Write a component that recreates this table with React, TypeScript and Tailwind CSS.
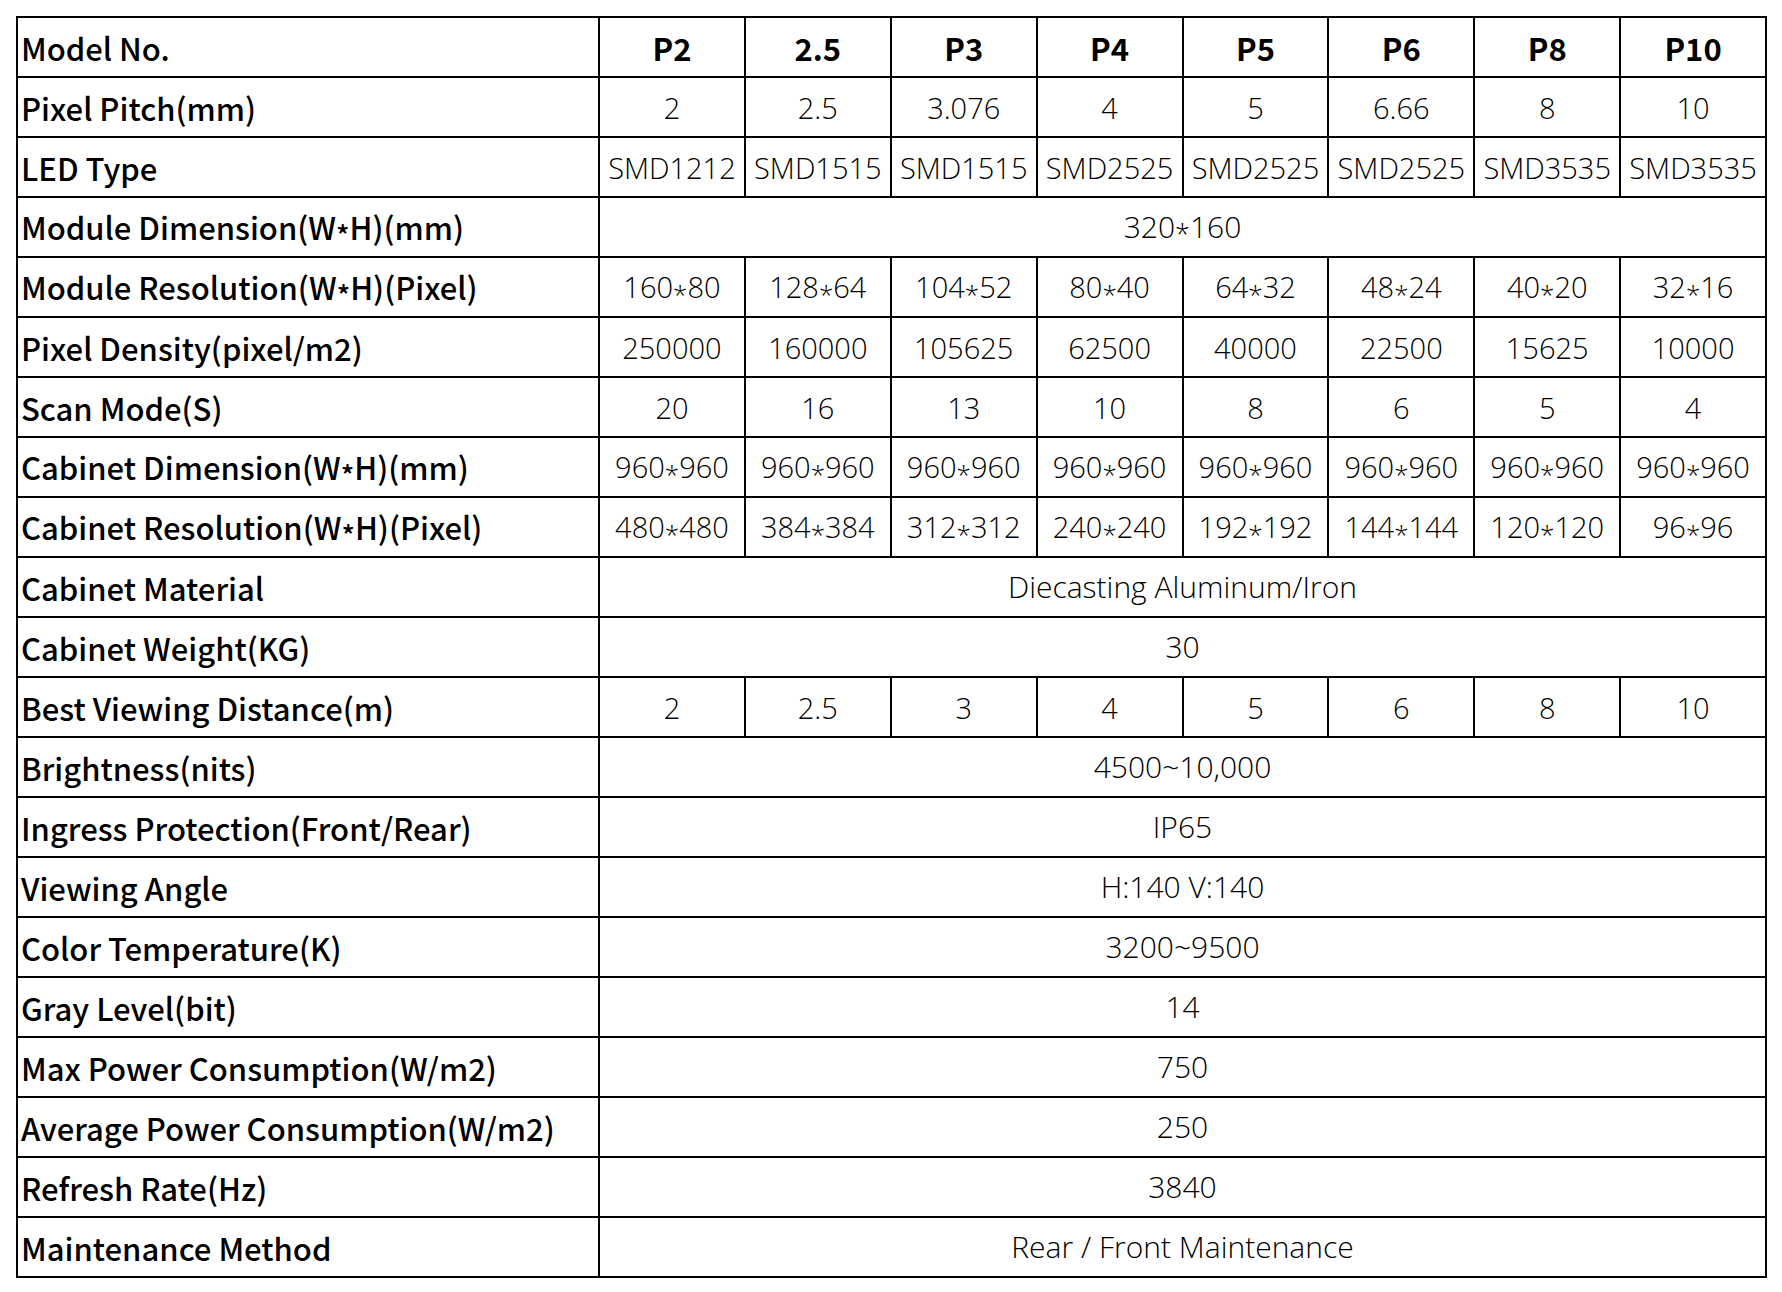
import type { ReactNode } from 'react';

const models = ['P2', '2.5', 'P3', 'P4', 'P5', 'P6', 'P8', 'P10'];

type Row = { label: string; values: string[] | string };

const rows: Row[] = [
  { label: 'Pixel Pitch(mm)', values: ['2', '2.5', '3.076', '4', '5', '6.66', '8', '10'] },
  { label: 'LED Type', values: ['SMD1212', 'SMD1515', 'SMD1515', 'SMD2525', 'SMD2525', 'SMD2525', 'SMD3535', 'SMD3535'] },
  { label: 'Module Dimension(W*H)(mm)', values: '320*160' },
  { label: 'Module Resolution(W*H)(Pixel)', values: ['160*80', '128*64', '104*52', '80*40', '64*32', '48*24', '40*20', '32*16'] },
  { label: 'Pixel Density(pixel/m2)', values: ['250000', '160000', '105625', '62500', '40000', '22500', '15625', '10000'] },
  { label: 'Scan Mode(S)', values: ['20', '16', '13', '10', '8', '6', '5', '4'] },
  { label: 'Cabinet Dimension(W*H)(mm)', values: Array(8).fill('960*960') },
  { label: 'Cabinet Resolution(W*H)(Pixel)', values: ['480*480', '384*384', '312*312', '240*240', '192*192', '144*144', '120*120', '96*96'] },
  { label: 'Cabinet Material', values: 'Diecasting Aluminum/Iron' },
  { label: 'Cabinet Weight(KG)', values: '30' },
  { label: 'Best Viewing Distance(m)', values: ['2', '2.5', '3', '4', '5', '6', '8', '10'] },
  { label: 'Brightness(nits)', values: '4500~10,000' },
  { label: 'Ingress Protection(Front/Rear)', values: 'IP65' },
  { label: 'Viewing Angle', values: 'H:140 V:140' },
  { label: 'Color Temperature(K)', values: '3200~9500' },
  { label: 'Gray Level(bit)', values: '14' },
  { label: 'Max Power Consumption(W/m2)', values: '750' },
  { label: 'Average Power Consumption(W/m2)', values: '250' },
  { label: 'Refresh Rate(Hz)', values: '3840' },
  { label: 'Maintenance Method', values: 'Rear / Front Maintenance' },
];

// labels: heavy, narrow face; values: light, wide face
const labelFont = { fontFamily: '"Noto Sans CJK SC", "Microsoft YaHei", sans-serif' };
const valueFont = { fontFamily: '"Open Sans", "Noto Sans", sans-serif' };

const cell = 'border-2 border-black leading-none';

// the source sheet's font sets "*" at mid-height, drop it a little
function Text({ value }: { value: string }) {
  const parts = value.split('*');
  const out: ReactNode[] = [];
  parts.forEach((p, i) => {
    if (i > 0) {
      out.push(
        <span key={`s${i}`} className="relative top-[6px] text-[0.9em]">
          *
        </span>
      );
    }
    out.push(p);
  });
  return <>{out}</>;
}

export default function App() {
  return (
    <div className="min-h-screen bg-white pl-[16px] pt-[16px]">
      <table className="table-fixed border-collapse w-[1749px] text-black">
        <colgroup>
          <col className="w-[582px]" />
          {models.map((m) => (
            <col key={m} className="w-[145.875px]" />
          ))}
        </colgroup>
        <tbody>
          <tr className="h-[60px]">
            <td className={`${cell} pl-[3px] text-[31px] font-medium whitespace-nowrap`} style={labelFont}>
              Model No.
            </td>
            {models.map((m) => (
              <td key={m} className={`${cell} text-center text-[31px] font-bold`} style={labelFont}>
                {m}
              </td>
            ))}
          </tr>
          {rows.map((row) => (
            <tr key={row.label} className="h-[60px]">
              <td className={`${cell} pl-[3px] text-[31px] font-medium whitespace-nowrap`} style={labelFont}>
                <Text value={row.label} />
              </td>
              {typeof row.values === 'string' ? (
                <td colSpan={8} className={`${cell} text-center text-[30px] font-light`} style={valueFont}>
                  <Text value={row.values} />
                </td>
              ) : (
                row.values.map((v, i) => (
                  <td key={i} className={`${cell} text-center text-[29px] font-light whitespace-nowrap`} style={valueFont}>
                    <Text value={v} />
                  </td>
                ))
              )}
            </tr>
          ))}
        </tbody>
      </table>
    </div>
  );
}
